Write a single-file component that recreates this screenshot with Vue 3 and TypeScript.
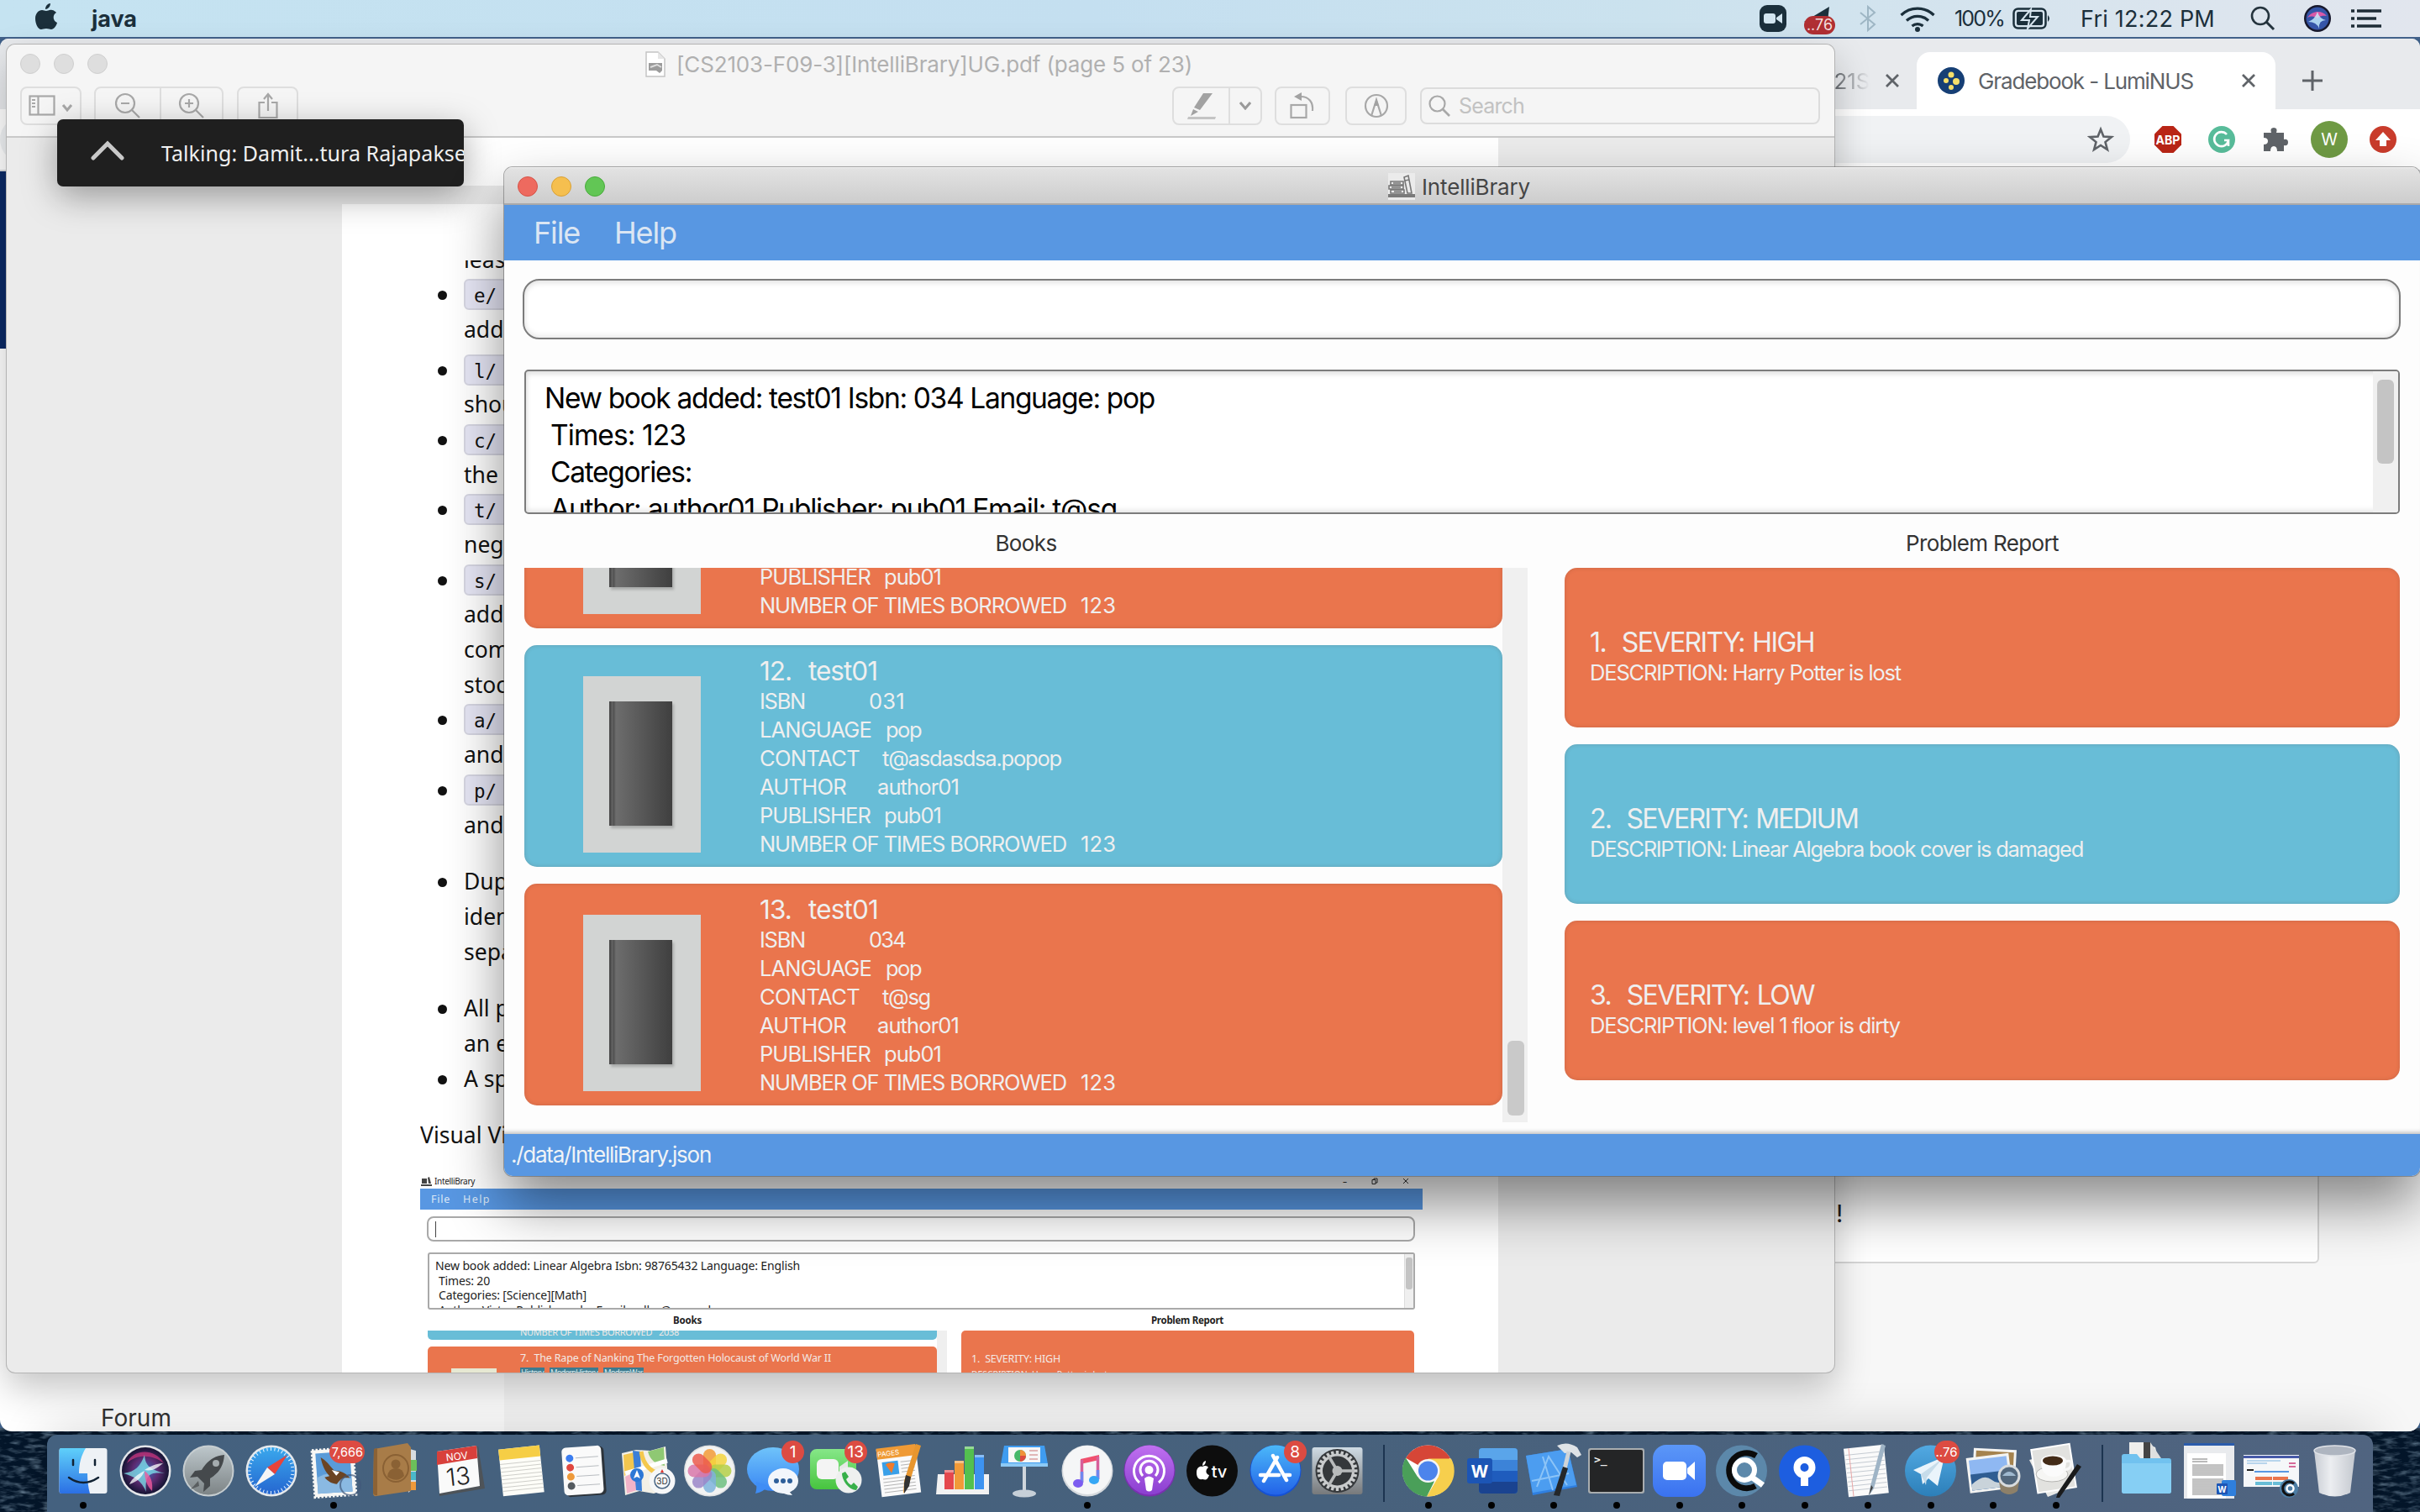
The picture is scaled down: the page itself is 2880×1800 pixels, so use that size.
<script setup lang="ts">
interface Book {
  title: string
  titleWidth: number
  isbn: string
  contact: string
  contactWidth: number
}
interface Problem {
  head: string
  headWidth: number
  text: string
  textWidth: number
}
interface DockItem {
  name: string
  art: string
  running?: boolean
  badge?: string
  wide?: boolean
}
interface GuideItem {
  code?: string
  lines: string[]
  space?: string
}

// Tracks a label so that it fills the given width in pixels.
const vFit = {
  mounted(el: HTMLElement, binding: { value: number }) {
    const natural = el.getBoundingClientRect().width
    const count = (el.textContent ?? '').length
    if (count > 0 && binding.value > 0) {
      el.style.letterSpacing = `${((binding.value - natural) / count).toFixed(3)}px`
    }
  },
}

const books: Book[] = [
  { title: '11.  test01', titleWidth: 139, isbn: '030', contact: 't@sg', contactWidth: 57 },
  { title: '12.  test01', titleWidth: 140, isbn: '031', contact: 't@asdasdsa.popop', contactWidth: 213 },
  { title: '13.  test01', titleWidth: 141, isbn: '034', contact: 't@sg', contactWidth: 57 },
]

const problems: Problem[] = [
  { head: '1.  SEVERITY: HIGH', headWidth: 267, text: 'DESCRIPTION: Harry Potter is lost', textWidth: 370 },
  { head: '2.  SEVERITY: MEDIUM', headWidth: 319, text: 'DESCRIPTION: Linear Algebra book cover is damaged', textWidth: 587 },
  { head: '3.  SEVERITY: LOW', headWidth: 267, text: 'DESCRIPTION: level 1 floor is dirty', textWidth: 369 },
]

const guide: GuideItem[] = [
  { code: 'e/', lines: ['', 'add'] },
  { code: 'l/', lines: ['', 'shou'], space: 'space-s' },
  { code: 'c/', lines: ['', 'the'] },
  { code: 't/', lines: ['', 'nega'] },
  { code: 's/', lines: ['', 'add', 'com', 'stoc'] },
  { code: 'a/', lines: ['', 'and'] },
  { code: 'p/', lines: ['', 'and'] },
  { lines: ['Dup', 'iden', 'sepa'], space: 'space-l' },
  { lines: ['All p', 'an e'], space: 'space-l' },
  { lines: ['A sp'] },
]

const miniBorrowed = 'NUMBER OF TIMES BORROWED   2038'
const miniBook = '7.  The Rape of Nanking The Forgotten Holocaust of World War II'
const miniProblem = '1.  SEVERITY: HIGH'

const range = (n: number): number[] => Array.from({ length: n }, (_, i) => i)

const photoPetals = ['#f39a36', '#f5d33d', '#b5cf48', '#6fbf7f', '#7fb3dc', '#9b86c8', '#d977a9', '#ec5b4c']
  .map((c, i) => `<rect x="30" y="17" width="15" height="27" rx="7.5" fill="${c}" opacity=".85" transform="rotate(${i * 45} 37.5 43)"/>`)
  .join('')
const safariTicks = range(36)
  .map((i) => `<path d="M37.5 15v4" stroke="#e8f4ff" stroke-width="1" transform="rotate(${i * 10} 37.5 43)"/>`)
  .join('')
const gearTeeth = range(24)
  .map((i) => `<rect x="35.8" y="19" width="3.4" height="6" fill="#c9cbcc" transform="rotate(${i * 15} 37.5 43)"/>`)
  .join('')
const ruled = (x: number, y: number, w: number, n: number, gap: number, c: string): string =>
  range(n).map((i) => `<path d="M${x} ${y + i * gap}h${w}" stroke="${c}" stroke-width="1"/>`).join('')
const wordTile = `<rect x="23" y="16" width="46" height="54" rx="4" fill="#2b7cd3"/><path d="M23 20q0-4 4-4h38q4 0 4 4v10H23z" fill="#5aa5ea"/><path d="M23 30h46v13H23z" fill="#3c83d8"/><path d="M23 43h46v13H23z" fill="#1f5cbd"/><path d="M23 56h46v10q0 4-4 4H27q-4 0-4-4z" fill="#1a4390"/><rect x="9" y="28" width="30" height="30" rx="3" fill="#1c55b5"/><text x="24" y="51" text-anchor="middle" font-family="Inter" font-weight="700" font-size="20" fill="#fff">W</text>`

const appsLeft: DockItem[] = [
  { name: 'Finder', running: true, art: `<rect x="9.500" y="16" width="57" height="54" rx="3" fill="#eef2f6"/><path d="M12 16h29c-5 8-8 18-8 30h10c0 8 1 17 3 24H12q-2.500 0-2.500-3V19q0-3 2.500-3z" fill="url(#gFinder)"/><path d="M26 30v6M52 30v6" stroke="#123" stroke-width="2.500" stroke-linecap="round"/><path d="M21 51q17 12 35 0" fill="none" stroke="#123" stroke-width="2.500" stroke-linecap="round"/>` },
  { name: 'Siri', art: `<circle cx="38" cy="43" r="30.500" fill="#e3e5e9"/><circle cx="38" cy="43" r="28" fill="url(#gSiri)"/><path d="M16 34c6-16 32-20 44 0-12-10-32-12-44 0z" fill="#c8357e" opacity=".75"/><path d="M12 46c14-2 20-8 25-22 1 13 6 17 24 22-18-2-24 2-22 22-6-14-14-18-27-22z" fill="#7fe5ee" opacity=".75"/><path d="M37 42c6-4 14-8 22-8-6 5-12 10-22 8zM37 43c-8 4-15 9-18 16 9-3 15-8 18-16z" fill="#fff" opacity=".75"/><path d="M37 43c8 6 10 14 9 24-6-6-9-14-9-24z" fill="#f05a9d" opacity=".8"/>` },
  { name: 'Launchpad', art: `<circle cx="38" cy="43" r="30.500" fill="#c6cdd0"/><circle cx="38" cy="43" r="28.500" fill="url(#gSilver)"/><path d="M57 24c-13 1-21 8-27 18l-8 1-6 8 9-1 8 8-1 10 8-7 0-9c10-6 16-14 17-28z" fill="#45494c"/><circle cx="47" cy="34" r="4" fill="#a4abae"/><path d="M26 55l-9 10 10-4z" fill="#5a5e60"/>` },
  { name: 'Safari', art: `<circle cx="38" cy="43" r="30.500" fill="#e6e9ec"/><circle cx="38" cy="43" r="28" fill="url(#gSafari)"/>${safariTicks}<path d="M57 24L33 39l9 8z" fill="#e8433a"/><path d="M18 62l15-23 9 8z" fill="#f5f5f5"/>` },
  { name: 'Mail', running: true, badge: '7,666', wide: true, art: `<g transform="rotate(-4 37 46)"><rect x="14" y="17" width="49" height="56" fill="#f7f7f5" stroke="#f7f7f5" stroke-width="3" stroke-dasharray="2.500 2"/><rect x="18" y="21" width="41" height="48" fill="#5a9bd8"/><path d="M18 50q20-10 41 4v15H18z" fill="#8ab9e2"/><path d="M24 26c6 4 10 10 15 17 6 0 14 4 18 10-8-2-11 0-16 6-5-1-10-3-14-9l6-1c-5-6-8-14-9-23z" fill="#6b4423"/><path d="M36 42l9 3-4 4z" fill="#fff"/></g><circle cx="58" cy="60" r="12" fill="none" stroke="#42597a" stroke-width="2" opacity=".7"/>` },
  { name: 'Contacts', art: `<path d="M50 16l11 3v42l-9 8z" fill="#d7dce0"/><path d="M54 30h8v13h-8z" fill="#6cbf5a"/><path d="M54 44h7v10h-7z" fill="#4ab8c9"/><path d="M54 56h7v10h-7z" fill="#f09a3a"/><path d="M11 17l40-7 4 5v52L14 73q-4 1-4-4z" fill="#a87c48"/><path d="M11 17l4-1v56q-5 1-5-4z" fill="#8c6235"/><ellipse cx="37" cy="40" rx="15" ry="16" fill="none" stroke="#8a6134" stroke-width="2"/><circle cx="37" cy="35" r="5.500" fill="#8a6134"/><path d="M27 50q1-10 10-10t10 9q-8 9-20 1z" fill="#8a6134"/>` },
  { name: 'Calendar', art: `<path d="M12 22l48-8 8 50-54 9z" fill="#4e5358"/><path d="M11 20l47-7 4 48-48 9z" fill="#fafafa"/><path d="M11 20l47-7 1 15-48 8z" fill="#d8403b"/><text x="35" y="30" text-anchor="middle" transform="rotate(-7 35 28)" font-family="Inter" font-size="12" fill="#fff">NOV</text><text x="37" y="60" text-anchor="middle" transform="rotate(-6 37 56)" font-family="Inter" font-weight="300" font-size="29" fill="#222">13</text>` },
  { name: 'Notes', art: `<g transform="rotate(-6 37 44)"><rect x="13" y="15" width="49" height="56" fill="#fdfdf8"/><rect x="13" y="15" width="49" height="13" fill="#f6ce45"/>${ruled(13, 33, 49, 8, 4.6, '#cfcfca')}</g>` },
  { name: 'Reminders', art: `<g transform="rotate(-4 37 44)"><rect x="12" y="14" width="47" height="58" rx="5" fill="#2d343b" transform="translate(3 1)"/><rect x="12" y="14" width="47" height="57" rx="5" fill="#fafafa"/><circle cx="21" cy="27" r="4.500" fill="#3b7df0"/><circle cx="21" cy="38" r="4.500" fill="#e0473f"/><circle cx="21" cy="49" r="4.500" fill="#ee9a3b"/><circle cx="21" cy="60" r="4.500" fill="#555b60"/>${ruled(28, 27, 27, 4, 11, '#b8bcc0')}</g>` },
  { name: 'Maps', art: `<path d="M7 22l17-4 17 1 18-5 4 50-18 6-17-3-17 5z" fill="#f3f0e6"/><path d="M9 24l13-3 1 20-13 8z" fill="#f2c64f"/><path d="M38 20l19-5 1 22q-16-2-20-17z" fill="#8fc873"/><path d="M11 50l12-6 2 22-12 4z" fill="#f1b3c8"/><path d="M20 19l9 1 2 47-7-1z" fill="#3b7fd8"/><path d="M11 46l50-15" stroke="#fff" stroke-width="5"/><path d="M30 20q4 26 30 28" fill="none" stroke="#f4c84c" stroke-width="5"/><circle cx="25" cy="48" r="8" fill="#2b77d6"/><path d="M25 42l4 10-4-2-4 2z" fill="#fff"/><circle cx="55" cy="55" r="15.500" fill="#f6f7f8"/><circle cx="55" cy="55" r="9" fill="none" stroke="#4a6684" stroke-width="1.500"/><text x="55" y="59" text-anchor="middle" font-family="Inter" font-size="10" fill="#333">3D</text><path d="M55 41l2 4h-4z" fill="#e0342d"/>` },
  { name: 'Photos', art: `<circle cx="37.500" cy="43" r="30.500" fill="#dfe1e2"/><circle cx="37.500" cy="43" r="29" fill="#f2f3f3"/>${photoPetals}` },
  { name: 'Messages', badge: '1', art: `<ellipse cx="38" cy="41" rx="31" ry="26" fill="url(#gBlue)"/><path d="M18 56q1 8-1 14 10-2 15-9z" fill="#3f8df5"/><ellipse cx="50" cy="55" rx="18" ry="15" fill="#f2f6fb"/><path d="M56 66l5 6q-7 0-12-3z" fill="#f2f6fb"/><circle cx="42" cy="55" r="3" fill="#2e5f9a"/><circle cx="50" cy="55" r="3" fill="#2e5f9a"/><circle cx="58" cy="55" r="3" fill="#2e5f9a"/>` },
  { name: 'FaceTime', badge: '13', art: `<rect x="7" y="17" width="55" height="48" rx="8" fill="url(#gGreen)"/><rect x="15" y="29" width="26" height="24" rx="6" fill="#f4f4f4"/><path d="M42 38l10-7v20l-10-7z" fill="#e6e8e6"/><circle cx="53" cy="54" r="15.500" fill="#eef0ef"/><path d="M45 46l4-2 4 6-3 3q2 5 6 7l3-3 5 5-2 4q-6 0-12-7-5-7-5-13z" fill="#37b04a"/>` },
  { name: 'Pages', art: `<g transform="rotate(-7 35 44)"><rect x="14" y="15" width="47" height="57" fill="#fafafa"/><rect x="14" y="14" width="47" height="13" fill="#ef9a35"/><text x="28" y="24" text-anchor="middle" font-family="Inter" font-size="8" fill="#fff">PAGES</text><rect x="19" y="31" width="19" height="16" fill="#3aa0e8"/><path d="M23 34q5-3 11 0l-5 11z" fill="#f07b2b"/>${ruled(41, 33, 16, 4, 4, '#b5b5b5')}${ruled(18, 51, 38, 5, 4, '#b5b5b5')}</g><path d="M58 11l6 2-13 42-8 15 1-15z" fill="#e8962e"/><path d="M46 48l6 2-2 11-6 9 0-12z" fill="#333"/>` },
  { name: 'Numbers', art: `<path d="M10 47h61v24H8z" fill="#f2f2f2"/><rect x="18" y="42" width="11" height="23" fill="#e5484d"/><rect x="30" y="31" width="11" height="34" fill="#f19a38"/><rect x="42" y="14" width="11" height="51" fill="#53c04f"/><rect x="54" y="24" width="11" height="41" fill="#3d93f0"/><path d="M18 42h11v3H18zM30 31h11v3H30zM42 14h11v3H42zM54 24h11v3H54z" fill="#fff" opacity=".4"/>` },
  { name: 'Keynote', art: `<path d="M14 13h48l4 22H10z" fill="#3f9cf0"/><path d="M10 34h56v4H10z" fill="#8cc9f5"/><rect x="19" y="15" width="38" height="18" fill="#f7f7f7"/><circle cx="33" cy="25" r="7" fill="#46b86b"/><path d="M33 25V18a7 7 0 0 1 7 7z" fill="#f0913a"/><path d="M33 25h7a7 7 0 0 1-7 7z" fill="#dd4a42"/><path d="M44 19h10M44 24h10M44 29h10" stroke="#c77" stroke-width="1"/><rect x="36" y="38" width="4" height="29" fill="#cfd6dc"/><ellipse cx="38" cy="70" rx="14" ry="4.500" fill="#c6cfd8"/>` },
  { name: 'Music', running: true, art: `<circle cx="38" cy="43" r="30.500" fill="#d5d9dd"/><circle cx="38" cy="42" r="29" fill="#f5f6f7"/><path d="M30 29l22-5v6l-22 5z" fill="#f0506e"/><path d="M31.500 30v27M50.500 26v27" stroke="#d65f9a" stroke-width="3.500"/><path d="M31.500 44v13M50.500 42v11" stroke="#6f86ee" stroke-width="3.500"/><ellipse cx="27" cy="58" rx="6" ry="5" fill="#7c5cf0"/><ellipse cx="46" cy="54" rx="6" ry="5" fill="#35a7f5"/>` },
  { name: 'Podcasts', art: `<circle cx="38" cy="43" r="30.500" fill="#7a2fb0"/><circle cx="38" cy="42" r="29.500" fill="url(#gPurple)"/><g fill="none" stroke="#fff" stroke-width="3"><path d="M26 57a18 18 0 1 1 23 0"/><path d="M30 49a10.500 10.500 0 1 1 15 0"/></g><circle cx="37.500" cy="42" r="5" fill="#fff"/><path d="M32 52q5-5 11 0l-2 14q-3.500 3-7 0z" fill="#fff"/>` },
  { name: 'TV', art: `<circle cx="37.500" cy="43" r="30.500" fill="#0d0d0d"/><path d="M26 38c3-2 6-1 7 1-4 3-3 8 1 9-2 6-4 6-8 5-5 1-7-3-7-8 0-6 4-8 7-7zM26 37q0-5 4-6 0 5-4 6z" fill="#fff"/><text x="46" y="51" text-anchor="middle" font-family="Inter" font-weight="500" font-size="20" fill="#fff">tv</text>` },
  { name: 'App Store', badge: '8', art: `<circle cx="38" cy="43" r="30.500" fill="#1551d4"/><circle cx="38" cy="42" r="29.500" fill="url(#gStore)"/><g stroke="#fff" stroke-width="4.500" stroke-linecap="round"><path d="M40 27L24 55M35 25l16 29M20 48h22M48 48h7"/></g>` },
  { name: 'System Preferences', art: `<rect x="7.500" y="15" width="60" height="56" rx="3" fill="url(#gSilver2)"/><circle cx="37.500" cy="43" r="26" fill="#35383b"/>${gearTeeth}<circle cx="37.500" cy="43" r="19" fill="none" stroke="#c9cbcc" stroke-width="3"/><circle cx="37.500" cy="43" r="6" fill="#b8babb"/><path d="M37.500 43h20M37.500 43l-10-17M37.500 43l-10 17" stroke="#b8babb" stroke-width="3.500"/>` },
]

const appsRight: DockItem[] = [
  { name: 'Chrome', running: true, art: `<circle cx="37.500" cy="43" r="30.500" fill="#fff"/><path d="M37.500 43L11.100 27.700A30.500 30.500 0 0 1 64 28z" fill="#d64637"/><path d="M37.500 28.500H65A30.500 30.500 0 0 1 36 73.500l14-24z" fill="#f7cf4d"/><path d="M25 50L11 27.500A30.500 30.500 0 0 0 36 73.500l9-18z" fill="#4a9f59"/><circle cx="37.500" cy="43" r="14" fill="#f5f5f5"/><circle cx="37.500" cy="43" r="11.500" fill="#4c84ec"/>` },
  { name: 'Word', running: true, art: wordTile },
  { name: 'Xcode', running: true, art: `<path d="M5 25l50-8 11 45-53 10z" fill="#2f7fe0"/><path d="M5 25l50-8 10 43-52 9z" fill="#4c9df0"/><g fill="none" stroke="#8cc4f7" stroke-width="2"><path d="M18 62l14-36 22 34M12 55l44-9M25 26l12 40"/></g><path d="M42 13q12-6 24 2l5 9-5 3-7-6-8 1z" fill="#dfe3e6"/><path d="M56 20l-6 25" stroke="#cfd4d8" stroke-width="5"/><path d="M49 38l6 2-10 33-7-1z" fill="#24272a"/>` },
  { name: 'Terminal', running: true, art: `<rect x="4" y="16" width="67" height="54" rx="3" fill="#a9adaf"/><rect x="6" y="18" width="63" height="50" rx="2" fill="#242526"/><text x="11" y="34" font-family="DejaVu Sans Mono" font-weight="700" font-size="13" fill="#eee">&gt;_</text>` },
  { name: 'Zoom', running: true, art: `<rect x="6" y="12" width="63" height="62" rx="16" fill="url(#gZoom)"/><rect x="18" y="32" width="28" height="22" rx="5" fill="#fff"/><path d="M47 40l9-8v22l-9-8z" fill="#fff"/>` },
  { name: 'Search', running: true, art: `<circle cx="37.500" cy="43" r="30.500" fill="#5c88aa"/><path d="M55 25a21 21 0 1 0-1 36" fill="none" stroke="#0b0b0b" stroke-width="7"/><circle cx="41" cy="42" r="12" fill="none" stroke="#fff" stroke-width="6"/><path d="M49 50l14 10" stroke="#fff" stroke-width="7"/>` },
  { name: 'Sourcetree', running: true, art: `<circle cx="37.500" cy="43" r="30.500" fill="#1d5ee0"/><circle cx="37.500" cy="39" r="9" fill="none" stroke="#fff" stroke-width="8"/><rect x="33" y="48" width="9" height="13" fill="#fff"/>` },
  { name: 'TextEdit', running: true, art: `<g transform="rotate(-6 36 44)"><rect x="12" y="14" width="48" height="58" fill="#fafafa"/>${ruled(13, 22, 46, 9, 5.3, '#c5cbd2')}<path d="M18 14v58" stroke="#e8a6a6"/></g><path d="M54 11l5 2-14 51-6 9 2-12z" fill="#9fb4c6"/><path d="M42 60l-3 12 5-9z" fill="#444"/>` },
  { name: 'Telegram', running: true, badge: '..76', art: `<circle cx="37.500" cy="43" r="30.500" fill="url(#gTele)"/><path d="M17 42l37-16-8 35-11-9-7 7-2-12z" fill="#eaf4fb"/><path d="M26 47l25-18-18 22-1 9z" fill="#c6dcea"/>` },
  { name: 'Preview', running: true, art: `<g transform="rotate(3 40 36)"><rect x="14" y="17" width="51" height="42" fill="#f4f4f2"/><rect x="17" y="20" width="45" height="36" fill="#a5834e"/></g><g transform="rotate(-7 32 46)"><rect x="8" y="25" width="51" height="42" fill="#f4f4f2"/><rect x="11" y="28" width="45" height="36" fill="#8fb8f2"/><path d="M11 45h45v19H11z" fill="#2f5d92"/><path d="M11 57q16-12 24-3t21 0v10H11z" fill="#c9d3da"/></g><path d="M44 50h26l-3 17q-10 8-20 0z" fill="#8d8069"/><circle cx="57" cy="49" r="12" fill="#53687d" stroke="#d8dcdf" stroke-width="3"/><path d="M49 49q8-10 16 0z" fill="#9fb9cf"/>` },
  { name: 'Automator', running: true, art: `<path d="M6 30l18-5 37 36-33 13z" fill="#e9e9e7"/><g transform="rotate(-9 36 40)"><rect x="12" y="14" width="46" height="52" fill="#e2e2df" stroke="#fff" stroke-width="2"/></g><ellipse cx="33" cy="47" rx="19" ry="9" fill="#f6f6f4" stroke="#b5b5b2"/><path d="M20 31h30q0 19-15 19T20 31z" fill="#fbfbfb"/><ellipse cx="35" cy="31" rx="15" ry="7" fill="#fbfbfb"/><ellipse cx="34" cy="31" rx="12" ry="5.500" fill="#432b17"/><path d="M49 32q9-3 6 6-3 5-9 3" fill="none" stroke="#f8f8f8" stroke-width="3"/><path d="M63 35l5 3-26 37-4 0 2-6z" fill="#1a1b1c"/>` },
]

const stacks: DockItem[] = [
  { name: 'Downloads', art: `<path d="M17 9h17l14 6 4 16H17z" fill="#eeeeec"/><path d="M34 9h8v22h-8z" fill="#444"/><path d="M42 9l15 22H42z" fill="#dfe0e0"/><path d="M8 26q0-3 3-3h15l4 5h34q3 0 3 3v36q0 3-3 3H11q-3 0-3-3z" fill="#71c2ef"/><path d="M8 34h59v33q0 3-3 3H11q-3 0-3-3z" fill="#86cff4"/>` },
  { name: 'Document', art: `<rect x="8" y="10" width="60" height="66" fill="#e9ebee"/><rect x="8" y="10" width="60" height="3" fill="#2b5cab"/><rect x="12" y="22" width="46" height="54" fill="#fff"/>${ruled(18, 29, 18, 2, 3, '#777')}${ruled(18, 36, 37, 7, 2, '#888')}${ruled(18, 53, 37, 10, 2, '#888')}<rect x="53" y="54" width="17" height="19" rx="2" fill="#2f7fdc"/><rect x="47" y="58" width="13" height="13" rx="1" fill="#1c55b5"/><text x="53.500" y="68.500" text-anchor="middle" font-family="Inter" font-weight="700" font-size="10" fill="#fff">W</text>` },
  { name: 'Window', art: `<rect x="4" y="24" width="66" height="38" fill="#f5f7f9"/><rect x="4" y="25" width="66" height="3" fill="#4659a8"/><path d="M8 31h40M8 34h24" stroke="#7bb3e0"/><path d="M58 34h8M58 38h8" stroke="#d56a9a" stroke-width="2"/><rect x="17" y="43" width="41" height="2" fill="#5897e2"/><path d="M8 41h8v2H8z" fill="#222"/><path d="M18 50h20v4H18zM39 50h18v4H39z" fill="#ea754d"/><path d="M18 56h20v4H18zM39 56h18v4H39z" fill="#68bdd7"/><circle cx="58" cy="64" r="11" fill="#4d7ea5"/><path d="M64 58a8 8 0 1 0 0 12" fill="none" stroke="#111" stroke-width="3"/><circle cx="59.500" cy="64" r="4" fill="none" stroke="#fff" stroke-width="2.500"/>` },
  { name: 'Trash', art: `<path d="M13 19h49l-6 50q-18 9-37 0z" fill="url(#gTrash)"/><ellipse cx="37.500" cy="19" rx="24.500" ry="6" fill="#aeb5c0" stroke="#e0e3e8" stroke-width="1.500"/>` },
]
const dockGroups: DockItem[][] = [appsLeft, appsRight, stacks]
</script>

<template>
  <div class="desktop">
    <svg class="wallpaper" width="2880" height="100">
      <filter id="sea"><feTurbulence type="fractalNoise" baseFrequency=".06 .2" numOctaves="3" seed="4" /><feColorMatrix values="0 0 0 0 .2  0 0 0 0 .3  0 0 0 0 .4  1.6 0 0 0 -.72" /></filter>
      <rect width="2880" height="100" fill="#04162a" />
      <rect width="2880" height="100" filter="url(#sea)" />
    </svg>

    <header class="menubar">
      <svg class="apple" width="26" height="32" viewBox="0 0 26 32"><path d="M18 0c0 4-3 7-6 7 0-4 3-7 6-7zM13 9c2 0 4-2 7-1 2 0 4 2 5 3-5 3-4 10 1 12-1 4-4 8-7 8-2 0-3-1-6-1s-4 1-6 1C3 31 0 24 0 18 0 12 4 8 8 8c2 0 3 1 5 1z" fill="#1b2f3b" /></svg>
      <span v-fit="54" class="menubar-app">java</span>
      <div class="status">
        <svg width="32" height="32" viewBox="0 0 32 32"><rect width="32" height="32" rx="9" fill="#1b2f3b" /><rect x="5" y="10" width="14" height="12" rx="3" fill="#d2e5ef" /><path d="M20 15l7-5v12l-7-5z" fill="#d2e5ef" /></svg>
        <div class="tray">
          <svg width="34" height="32" viewBox="0 0 34 32"><path d="M0 20L30 2l-3 26z" fill="#1b2f3b" /></svg>
          <span class="tray-badge">..76</span>
        </div>
        <svg class="ml-bt" width="20" height="32" viewBox="0 0 20 32"><path d="M1 9l17 14-8 7V2l8 7L1 23" fill="none" stroke="#9eb6c4" stroke-width="2" /></svg>
        <svg class="ml-wifi" width="42" height="32" viewBox="0 0 42 32"><g fill="none" stroke="#1b2f3b" stroke-width="3.2"><path d="M1.500 12a28 28 0 0 1 39 0M8 18.500a19 19 0 0 1 26 0M14.500 25a10 10 0 0 1 13 0" /></g><circle cx="21" cy="29" r="3" fill="#1b2f3b" /></svg>
        <span v-fit="59" class="ml-pct st-text">100%</span>
        <svg class="ml-bat" width="46" height="26" viewBox="0 0 46 26"><rect x="1.500" y="1.500" width="38" height="23" rx="5" fill="none" stroke="#1b2f3b" stroke-width="2.500" /><rect x="5" y="5" width="31" height="16" rx="2" fill="#1b2f3b" /><path d="M42 9q4 4 0 8z" fill="#1b2f3b" /><path d="M22 2L11 15h9l-2 10 12-14h-9z" fill="#1b2f3b" stroke="#d6e4ee" stroke-width="2" /></svg>
        <span v-fit="160" class="ml-time st-text st-time">Fri 12:22 PM</span>
        <svg class="ml-find" width="30" height="30" viewBox="0 0 30 30"><circle cx="12" cy="12" r="10" fill="none" stroke="#24333d" stroke-width="2.600" /><path d="M19 19l9 9" stroke="#24333d" stroke-width="3" /></svg>
        <svg class="ml-siri" width="32" height="32" viewBox="0 0 32 32"><circle cx="16" cy="16" r="16" fill="#17182c" /><circle cx="16" cy="16" r="13.500" fill="#3555a8" /><path d="M4 15c5-8 17-10 23-2-8-1-10 2-11 3-4-3-8-3-12-1z" fill="#d85aa8" /><path d="M5 20q8-3 11-12 2 8 10 10-9 0-8 10-3-8-13-8z" fill="#c9f1ff" opacity=".8" /></svg>
        <svg class="ml-list" width="36" height="22" viewBox="0 0 36 22"><path d="M0 2h4M7 2h29M0 11h4M7 11h23M0 20h4M7 20h29" stroke="#1e2c36" stroke-width="3.600" /></svg>
      </div>
    </header>

    <section class="chrome">
      <div class="tabs">
        <span class="tab-prev">021S</span>
        <svg class="tab-x" width="18" height="18" viewBox="0 0 18 18"><path d="M2 2l14 14M16 2L2 16" stroke="#5f6368" stroke-width="2.800" /></svg>
        <div class="tab">
          <svg width="32" height="32" viewBox="0 0 32 32"><circle cx="16" cy="16" r="16" fill="#163f75" /><g fill="#f7e06a"><circle cx="16" cy="9" r="3.500" /><circle cx="10" cy="16" r="3" /><circle cx="22" cy="17" r="4" /><circle cx="16" cy="24" r="3" /></g></svg>
          <span v-fit="256" class="tab-title">Gradebook - LumiNUS</span>
          <svg class="tab-close" width="18" height="18" viewBox="0 0 18 18"><path d="M2 2l14 14M16 2L2 16" stroke="#5f6368" stroke-width="2.800" /></svg>
        </div>
        <svg class="tab-plus" width="26" height="26" viewBox="0 0 26 26"><path d="M13 1v24M1 13h24" stroke="#5f6368" stroke-width="3" /></svg>
      </div>
      <div class="omni-row">
        <div class="omni"><svg width="32" height="32" viewBox="0 0 32 32"><path d="M16 4l3.400 8.600 9.300.6-7.200 5.900 2.400 9L16 23l-7.900 5.100 2.400-9-7.200-5.900 9.300-.6z" fill="none" stroke="#5f6368" stroke-width="2.600" /></svg></div>
        <div class="exts">
          <svg width="32" height="32" viewBox="0 0 32 32"><path d="M9.500 0h13L32 9.500v13L22.500 32h-13L0 22.500v-13z" fill="#b92516" /><text x="16" y="21.500" text-anchor="middle" font-family="Inter" font-weight="700" font-size="14" fill="#fff" textLength="29" lengthAdjust="spacingAndGlyphs">ABP</text></svg>
          <svg width="32" height="32" viewBox="0 0 32 32"><circle cx="16" cy="16" r="16" fill="#58bc9a" /><path d="M22 10a8.500 8.500 0 1 0 2 7h-5M24 17v7" fill="none" stroke="#fff" stroke-width="2.600" /></svg>
          <svg width="32" height="32" viewBox="0 0 32 32"><path d="M2 8h9q-2-6 3-6t3 6h9v8q5-1 5 3.500T26 23v7h-8q0-6-4-6t-4 6H2v-8q5 0 5-4t-5-4z" fill="#5f6368" /></svg>
          <span class="avatar">W</span>
          <svg width="32" height="32" viewBox="0 0 32 32"><circle cx="16" cy="16" r="16" fill="#c93c2c" /><path d="M16 7l9 10h-5v7h-8v-7H7z" fill="#fff" /></svg>
        </div>
      </div>
      <div class="page">
        <div class="page-band"></div>
        <aside class="page-side"><span v-fit="84">Forum</span></aside>
        <div class="page-main">
          <div class="page-card"><span>!</span></div>
        </div>
      </div>
    </section>

    <section class="preview">
      <div class="pv-head">
        <div class="pv-title">
          <div class="lights off"><i></i><i></i><i></i></div>
          <div class="pv-name">
            <svg width="24" height="31" viewBox="0 0 24 31"><path d="M1 1h14l8 8v21H1z" fill="#fff" stroke="#c4c4c4" stroke-width="1.500" /><path d="M15 1l8 8h-8z" fill="#e6e6e6" /><path d="M4 14h16v9l-3 3-4-3H4z" fill="#9b9b9b" /><path d="M6 19l8-3 5 3" stroke="#ddd" stroke-width="2" fill="none" /></svg>
            <span v-fit="614">[CS2103-F09-3][IntelliBrary]UG.pdf (page 5 of 23)</span>
          </div>
        </div>
        <div class="pv-tools">
          <div class="btn w73"><svg width="54" height="28" viewBox="0 0 54 28"><g fill="none" stroke="#a8a8a8" stroke-width="2.200"><rect x="1.500" y="2.500" width="29" height="22" /><path d="M11.500 2v23" /><path d="M41 13l5 6 5-6" stroke-width="3" /></g><path d="M4 7h4M4 11h4M4 15h4" stroke="#a8a8a8" stroke-width="2" /></svg></div>
          <div class="btn w80 left"><svg width="32" height="32" viewBox="0 0 32 32"><g fill="none" stroke="#a8a8a8" stroke-width="2.200"><circle cx="13" cy="13" r="11" /><path d="M8 13h10M21 21l9 9" /></g></svg></div>
          <div class="btn w75 right"><svg width="32" height="32" viewBox="0 0 32 32"><g fill="none" stroke="#a8a8a8" stroke-width="2.200"><circle cx="13" cy="13" r="11" /><path d="M8 13h10M13 8v10M21 21l9 9" /></g></svg></div>
          <div class="btn w73 share"><svg width="24" height="32" viewBox="0 0 24 32"><g fill="none" stroke="#a8a8a8" stroke-width="2.200"><path d="M8 12H1.500v18h21V12H16M12 22V3M7 8l5-6 5 6" /></g></svg></div>
          <div class="btn w68 left hl"><svg width="36" height="32" viewBox="0 0 36 32"><path d="M20 1h11L16 21l-7-3zM8 20l6 3-9 5z" fill="#a2a2a2" /><path d="M2 29h33l-1 3H1z" fill="#c4c4c4" /></svg></div>
          <div class="btn w39 right"><svg width="14" height="10" viewBox="0 0 14 10"><path d="M1 1l6 7 6-7" fill="none" stroke="#9a9a9a" stroke-width="3" /></svg></div>
          <div class="btn w66 g14"><svg width="30" height="32" viewBox="0 0 30 32"><g fill="none" stroke="#a8a8a8" stroke-width="2.200"><rect x="1.500" y="15" width="18" height="15" /><path d="M13 5c10 0 15 7 14 17" /></g><path d="M5 5l9-5v10z" fill="#a2a2a2" /></svg></div>
          <div class="btn w73 g18"><svg width="30" height="30" viewBox="0 0 30 30"><g fill="none" stroke="#a8a8a8" stroke-width="2.200"><circle cx="15" cy="15" r="13" /><path d="M9 27l6-19 6 19" /></g><path d="M15 6l3 9h-6z" fill="#a2a2a2" /></svg></div>
          <div class="search"><svg width="26" height="26" viewBox="0 0 26 26"><circle cx="10.500" cy="10.500" r="9" fill="none" stroke="#a8a8a8" stroke-width="2.200" /><path d="M17 17l8 8" stroke="#a8a8a8" stroke-width="2.600" /></svg><span v-fit="78">Search</span></div>
        </div>
      </div>
      <div class="pv-body">
        <div class="prev-page"></div>
        <div class="pdf">
          <div class="pdf-text">
            <div class="pl in">leas</div>
            <div v-for="(item, i) in guide" :key="i" class="bullet" :class="item.space">
              <i class="dot"></i>
              <div>
                <div v-for="(line, j) in item.lines" :key="j" class="pl"><code v-if="j === 0 && item.code">{{ item.code }}</code>{{ line }}</div>
              </div>
            </div>
            <div class="pl visual">Visual Vi</div>
          </div>
          <div class="mini">
            <div class="m-title">
              <svg width="13" height="11" viewBox="0 0 13 11"><path d="M0 9h13v2H0zM1 2h6v6H1zM8 1l2-1 2 8H9z" fill="#444" /></svg>
              <span v-fit="48">IntelliBrary</span>
              <div class="m-ctl"><b>–</b><svg width="8" height="8" viewBox="0 0 8 8"><path d="M1 2.500h4v5H1zM3 2.500V1h4v5H5" fill="none" stroke="#333" /></svg><svg width="8" height="8" viewBox="0 0 8 8"><path d="M1 1l6 6M7 1L1 7" stroke="#333" /></svg></div>
            </div>
            <div class="m-menu"><span v-fit="23">File</span><span v-fit="33">Help</span></div>
            <div class="m-input"><i></i></div>
            <div class="m-result">
              <div><span v-fit="434">New book added: Linear Algebra Isbn: 98765432 Language: English</span></div>
              <div class="ind"><span v-fit="61">Times: 20</span></div>
              <div class="ind"><span v-fit="176">Categories: [Science][Math]</span></div>
              <div class="ind"><span v-fit="363">Author: Victor Publisher: pku Email: seller@example.com</span></div>
              <div class="m-bar"><i></i></div>
            </div>
            <div class="m-heads"><b v-fit="34">Books</b><b v-fit="86">Problem Report</b></div>
            <div class="m-lists">
              <div class="m-left">
                <div class="m-card teal clip"><span v-fit="189">{{ miniBorrowed }}</span></div>
                <div class="m-card orange">
                  <i class="m-cover"></i>
                  <div><span v-fit="370">{{ miniBook }}</span>
                    <div class="m-tags"><em v-fit="29">History</em><em v-fit="58">ModernHistory</em><em v-fit="48">ModernWar</em></div>
                  </div>
                </div>
              </div>
              <div class="m-track"></div>
              <div class="m-right"><span v-fit="106">{{ miniProblem }}</span><small v-fit="162">DESCRIPTION: Harry Potter is lost</small></div>
            </div>
          </div>
        </div>
      </div>
    </section>

    <div class="talk">
      <svg width="40" height="24" viewBox="0 0 40 24"><path d="M3 21L20 4l17 17" fill="none" stroke="#c9c9c9" stroke-width="5" stroke-linecap="round" /></svg>
      <span v-fit="363">Talking: Damit...tura Rajapakse</span>
    </div>

    <section class="app">
      <div class="app-title">
        <div class="lights"><i class="r"></i><i class="y"></i><i class="g"></i></div>
        <div class="app-name">
          <svg width="32" height="32" viewBox="0 0 32 32"><rect width="32" height="32" fill="#ebebeb" /><path d="M0 25h32v4H0z" fill="#7a7a7a" /><g fill="none" stroke="#777" stroke-width="1.600"><path d="M3 10h15v4H3zM1 15h17v4H1zM3 20h16v4H3zM6 12h9M4 17h11M7 22h9" /><path d="M19 5l5-2 4 21h-5zM20 9l5-1" /></g></svg>
          <span v-fit="129">IntelliBrary</span>
        </div>
      </div>
      <nav class="app-menu"><span v-fit="55">File</span><span v-fit="74">Help</span></nav>
      <div class="app-body">
        <div class="cmd"></div>
        <div class="result">
          <div class="result-text">
            <div><span v-fit="726">New book added: test01 Isbn: 034 Language: pop</span></div>
            <div class="ind"><span v-fit="161">Times: 123</span></div>
            <div class="ind"><span v-fit="168">Categories:</span></div>
            <div class="ind"><span v-fit="674">Author: author01 Publisher: pub01 Email: t@sg</span></div>
          </div>
          <div class="result-bar"><i></i></div>
        </div>
        <div class="heads"><span class="h-books"><span v-fit="73">Books</span></span><span class="h-problems"><span v-fit="182">Problem Report</span></span></div>
        <div class="lists">
          <div class="books">
            <article v-for="(b, i) in books" :key="b.title" class="book" :class="i % 2 ? 'teal' : 'orange'">
              <div class="cover"><i></i></div>
              <div class="info">
                <div class="info-title"><span v-fit="b.titleWidth">{{ b.title }}</span></div>
                <div class="row"><span v-fit="54">ISBN</span><span v-fit="43" class="v-isbn">{{ b.isbn }}</span></div>
                <div class="row"><span v-fit="133">LANGUAGE</span><span v-fit="42" class="v-lang">pop</span></div>
                <div class="row"><span v-fit="119">CONTACT</span><span v-fit="b.contactWidth" class="v-contact">{{ b.contact }}</span></div>
                <div class="row"><span v-fit="103">AUTHOR</span><span v-fit="97" class="v-author">author01</span></div>
                <div class="row"><span v-fit="132">PUBLISHER</span><span v-fit="68" class="v-pub">pub01</span></div>
                <div class="row"><span v-fit="365">NUMBER OF TIMES BORROWED</span><span v-fit="42" class="v-num">123</span></div>
              </div>
            </article>
          </div>
          <div class="track"><i></i></div>
          <div class="problems">
            <article v-for="(p, i) in problems" :key="p.head" class="problem" :class="i % 2 ? 'teal' : 'orange'">
              <div class="p-head"><span v-fit="p.headWidth">{{ p.head }}</span></div>
              <div class="p-text"><span v-fit="p.textWidth">{{ p.text }}</span></div>
            </article>
          </div>
        </div>
      </div>
      <footer class="app-foot"><span v-fit="238">./data/IntelliBrary.json</span></footer>
    </section>

    <div class="dock">
      <svg width="0" height="0" class="defs">
        <defs>
          <linearGradient id="gFinder" x1="0" y1="0" x2="0" y2="1"><stop offset="0" stop-color="#5fd0fa" /><stop offset="1" stop-color="#2b6fe4" /></linearGradient>
          <radialGradient id="gSiri"><stop offset="0" stop-color="#3a6fc0" /><stop offset=".55" stop-color="#5b2a70" /><stop offset="1" stop-color="#141433" /></radialGradient>
          <linearGradient id="gSilver" x1="0" y1="0" x2="0" y2="1"><stop offset="0" stop-color="#bcc6ca" /><stop offset="1" stop-color="#7d8486" /></linearGradient>
          <linearGradient id="gSilver2" x1="0" y1="0" x2="0" y2="1"><stop offset="0" stop-color="#cfdbe4" /><stop offset="1" stop-color="#77797b" /></linearGradient>
          <linearGradient id="gSafari" x1="0" y1="0" x2="0" y2="1"><stop offset="0" stop-color="#3aa8ec" /><stop offset="1" stop-color="#2566d0" /></linearGradient>
          <linearGradient id="gBlue" x1="0" y1="0" x2="0" y2="1"><stop offset="0" stop-color="#6fc3fa" /><stop offset="1" stop-color="#3a87f4" /></linearGradient>
          <linearGradient id="gGreen" x1="0" y1="0" x2="0" y2="1"><stop offset="0" stop-color="#86e788" /><stop offset="1" stop-color="#47c43f" /></linearGradient>
          <linearGradient id="gPurple" x1="0" y1="0" x2="0" y2="1"><stop offset="0" stop-color="#c070f0" /><stop offset="1" stop-color="#8a3fd0" /></linearGradient>
          <linearGradient id="gStore" x1="0" y1="0" x2="0" y2="1"><stop offset="0" stop-color="#4bb8f9" /><stop offset="1" stop-color="#2262e8" /></linearGradient>
          <linearGradient id="gZoom" x1="0" y1="0" x2="0" y2="1"><stop offset="0" stop-color="#5b97f8" /><stop offset="1" stop-color="#3a72f0" /></linearGradient>
          <linearGradient id="gTele" x1="0" y1="0" x2="0" y2="1"><stop offset="0" stop-color="#52a9e2" /><stop offset="1" stop-color="#2c7fb9" /></linearGradient>
          <linearGradient id="gTrash" x1="0" y1="0" x2="1" y2="0"><stop offset="0" stop-color="#c9cdd4" /><stop offset=".4" stop-color="#eceef1" /><stop offset="1" stop-color="#c4c8cf" /></linearGradient>
        </defs>
      </svg>
      <div v-for="(group, g) in dockGroups" :key="g" class="dock-group">
        <div v-for="item in group" :key="item.name" class="dock-item">
          <svg width="75" height="92" viewBox="0 0 75 92" :aria-label="item.name" v-html="item.art"></svg>
          <span v-if="item.badge" class="badge" :class="{ wide: item.wide, mid: item.badge.startsWith('..') }">{{ item.badge }}</span>
          <i v-if="item.running" class="running"></i>
        </div>
      </div>
    </div>
  </div>
</template>

<style>
html,
body {
  margin: 0;
  overflow: hidden;
  background: #05182a;
}
</style>

<style scoped>
.desktop {
  position: relative;
  width: 2880px;
  height: 1800px;
  overflow: hidden;
  background: #3f6088;
  font-family: Inter, 'Liberation Sans', sans-serif;
}
.desktop span,
.desktop b,
.desktop em {
  white-space: pre;
}
svg {
  display: block;
  flex: none;
}
.wallpaper {
  position: absolute;
  left: 0;
  bottom: 0;
}

/* menu bar */
.menubar {
  height: 44px;
  display: flex;
  align-items: center;
  padding-left: 42px;
  padding-right: 46px;
  background: linear-gradient(90deg, #c5e3f1, #c4dff0 45%, #cbe2ee 68%, #e2e6ee);
  border-bottom: 2px solid #42618a;
  color: #1b2f3b;
}
.apple {
  margin-top: -5px;
}
.menubar-app {
  margin-left: 41px;
  font-size: 27px;
  font-weight: 700;
}
.status {
  margin-left: auto;
  display: flex;
  align-items: center;
}
.tray {
  position: relative;
  margin-left: 21px;
  width: 37px;
}
.tray-badge {
  position: absolute;
  left: 0;
  top: 13px;
  width: 37px;
  height: 22px;
  border-radius: 11px;
  background: #b02f33;
  color: #f3dede;
  font-size: 18px;
  line-height: 22px;
  text-align: center;
}
.ml-bt { margin-left: 29px; }
.ml-wifi { margin-left: 28px; }
.ml-pct { margin-left: 23px; }
.ml-bat { margin-left: 10px; }
.ml-time { margin-left: 35px; }
.ml-find { margin-left: 42px; }
.ml-siri { margin-left: 34px; }
.ml-list { margin-left: 24px; }
.st-text { font-size: 25px; }
.st-time { font-size: 27px; }

/* browser */
.chrome {
  position: absolute;
  left: 0;
  top: 46px;
  width: 2880px;
  height: 1658px;
  border-radius: 10px 10px 14px 14px;
  overflow: hidden;
  background: #fff;
  display: flex;
  flex-direction: column;
}
.tabs {
  height: 84px;
  flex: none;
  display: flex;
  align-items: center;
  background: #e8eaed;
  padding-left: 2166px;
  padding-top: 16px;
  box-sizing: border-box;
  color: #5f6368;
}
.tab-prev {
  width: 64px;
  font-size: 26px;
  -webkit-mask-image: linear-gradient(90deg, #000 25%, transparent 92%);
  mask-image: linear-gradient(90deg, #000 25%, transparent 92%);
}
.tab-x {
  margin-left: 13px;
}
.tab {
  margin-left: 20px;
  width: 427px;
  height: 68px;
  border-radius: 16px 16px 0 0;
  background: #fff;
  display: flex;
  align-items: center;
  padding-left: 25px;
  box-sizing: border-box;
}
.tab-title {
  margin-left: 16px;
  font-size: 26px;
}
.tab-close {
  margin-left: 57px;
}
.tab-plus {
  margin-left: 31px;
}
.omni-row {
  height: 72px;
  flex: none;
  display: flex;
  align-items: center;
  border-bottom: 2px solid #d8dadd;
}
.omni {
  width: 2535px;
  height: 56px;
  border-radius: 28px;
  background: #f0f2f4;
  display: flex;
  align-items: center;
  justify-content: flex-end;
  padding-right: 19px;
  box-sizing: border-box;
}
.exts {
  display: flex;
  align-items: center;
  margin-left: 29px;
}
.exts > * + * {
  margin-left: 32px;
}
.exts > .avatar {
  width: 44px;
  height: 44px;
  margin-left: 26px;
  margin-right: -6px;
  border-radius: 50%;
  background: #6f9a44;
  color: #fff;
  font-size: 20px;
  line-height: 44px;
  text-align: center;
}
.page {
  position: relative;
  flex: 1;
  display: flex;
}
.page-band {
  position: absolute;
  left: 0;
  top: 0;
  width: 8px;
  height: 211px;
  background: #0c2a66;
}
.page-side {
  width: 600px;
  display: flex;
  align-items: flex-end;
  padding: 0 0 0 120px;
  box-sizing: border-box;
  color: #333;
  font-size: 28px;
  line-height: 32px;
}
.page-main {
  flex: 1;
  background: #f7f7f7;
}
.page-card {
  width: 2160px;
  height: 1300px;
  border: 2px solid #d6d6d6;
  border-radius: 0 0 6px 6px;
  box-sizing: border-box;
  background: #fff;
  padding: 1221px 0 0 1583px;
  font-size: 29px;
  color: #222;
}

/* document viewer */
.preview {
  position: absolute;
  left: 8px;
  top: 53px;
  width: 2175px;
  height: 1581px;
  border-radius: 10px;
  overflow: hidden;
  background: #ebebeb;
  box-shadow: 0 0 0 1px #b4b4b4, 0 18px 44px rgba(0, 0, 0, 0.24);
}
.pv-head {
  height: 111px;
  background: #f5f5f5;
  border-bottom: 2px solid #c9c9c9;
  box-sizing: border-box;
}
.pv-title {
  height: 46px;
  margin-bottom: 4px;
  display: flex;
  align-items: center;
  padding-left: 16px;
}
.lights {
  display: flex;
  gap: 16px;
}
.lights i {
  width: 24px;
  height: 24px;
  border-radius: 50%;
  box-sizing: border-box;
  border: 1px solid #cfcfcf;
  background: #dedede;
}
.lights .r { background: #ee6a5f; border-color: #d65348; }
.lights .y { background: #f5bf4f; border-color: #d9a136; }
.lights .g { background: #62c655; border-color: #48ab3b; }
.pv-name {
  margin-left: 640px;
  display: flex;
  align-items: center;
  gap: 13px;
  font-size: 26px;
  color: #b0b0b0;
}
.pv-tools {
  display: flex;
  align-items: center;
  height: 46px;
  padding-left: 16px;
}
.btn {
  height: 46px;
  box-sizing: border-box;
  border: 2px solid #dedede;
  border-radius: 8px;
  display: flex;
  align-items: center;
  justify-content: center;
}
.w73 { width: 73px; }
.w80 { width: 80px; }
.w75 { width: 76px; }
.w68 { width: 69px; }
.w39 { width: 40px; }
.w66 { width: 66px; }
.btn.left { margin-left: 15px; border-radius: 8px 0 0 8px; }
.btn.right { margin-left: -2px; border-radius: 0 8px 8px 0; }
.btn.share { margin-left: 16px; }
.btn.left.hl { margin-left: 1040px; }
.btn.g14 { margin-left: 15px; }
.btn.g18 { margin-left: 18px; }
.search {
  margin-left: 16px;
  width: 476px;
  height: 44px;
  box-sizing: border-box;
  border: 2px solid #dcdcdc;
  border-radius: 8px;
  display: flex;
  align-items: center;
  gap: 10px;
  padding-left: 8px;
  font-size: 25px;
  color: #c2c2c2;
}
.pv-body {
  padding-left: 399px;
  display: flex;
  flex-direction: column;
  gap: 22px;
}
.prev-page {
  width: 1376px;
  height: 57px;
  background: #fff;
}
.pdf {
  width: 1376px;
  height: 1400px;
  padding: 67px 0 0 93px;
  box-sizing: border-box;
  background: #fff;
}
.pdf-text {
  height: 1087px;
  overflow: hidden;
  font-family: 'Noto Sans', 'Open Sans', sans-serif;
  font-size: 26.5px;
  color: #111;
}
.pl {
  height: 41.7px;
  line-height: 41.7px;
  white-space: pre;
}
.pl.in {
  margin: -21.5px 0 0 52px;
}
.bullet {
  display: flex;
}
.dot {
  width: 11px;
  height: 11px;
  margin: 16px 20px 0 21px;
  margin-left: 21px;
  border-radius: 50%;
  background: #111;
}
.space-s { margin-top: 6px; }
.space-l { margin-top: 26px; }
.visual { margin-top: 26px; }
.pl code {
  display: inline-block;
  height: 37px;
  line-height: 36px;
  padding: 0 60px 0 10px;
  box-sizing: border-box;
  border: 2px solid #d6d6e2;
  border-radius: 6px;
  background: #e6e6f5;
  font-family: 'DejaVu Sans Mono', monospace;
  font-size: 22.5px;
  vertical-align: baseline;
}

/* picture of the program inside the document */
.mini {
  width: 1193px;
  height: 300px;
  background: #fff;
  color: #222;
  font-family: 'Noto Sans', 'Open Sans', sans-serif;
}
.m-title {
  height: 18px;
  display: flex;
  align-items: center;
  gap: 3px;
  padding-left: 1px;
  font-size: 10px;
}
.m-ctl {
  margin-left: auto;
  margin-right: 16px;
  display: flex;
  align-items: center;
  gap: 29px;
}
.m-ctl b { font-weight: 400; }
.m-menu {
  height: 25px;
  display: flex;
  align-items: center;
  gap: 15px;
  padding-left: 13px;
  background: #5897e2;
  color: #dbe7f6;
  font-size: 12.5px;
}
.m-input {
  margin: 8px 9px 0 8px;
  height: 30px;
  box-sizing: border-box;
  border: 2px solid #a9a9a9;
  border-radius: 8px;
  padding: 4px 0 0 8px;
}
.m-input i {
  display: block;
  width: 1px;
  height: 19px;
  background: #444;
}
.m-result {
  position: relative;
  margin: 13px 9px 0;
  height: 68px;
  box-sizing: border-box;
  border: 2px solid #a9a9a9;
  border-radius: 3px;
  overflow: hidden;
  padding: 5px 0 0 7px;
  font-size: 14px;
  line-height: 17.7px;
}
.m-result .ind { padding-left: 4px; height: 17.7px; }
.m-bar {
  position: absolute;
  right: 0;
  top: 0;
  width: 10px;
  height: 64px;
  background: #efefef;
  border-left: 1px solid #ddd;
}
.m-bar i {
  display: block;
  margin: 4px 1px;
  height: 38px;
  border-radius: 3px;
  background: #c4c4c4;
}
.m-heads {
  height: 25px;
  display: flex;
  align-items: center;
  font-size: 11.5px;
  padding-left: 301px;
  gap: 535px;
}
.m-lists {
  display: flex;
  padding-left: 9px;
  height: 110px;
}
.m-left {
  width: 606px;
  display: flex;
  flex-direction: column;
  gap: 8px;
}
.m-card {
  position: relative;
  padding-left: 110px;
  border-radius: 5px;
  line-height: 16px;
  color: #f3e9e5;
}
.m-card.clip {
  height: 12px;
  overflow: hidden;
  border-radius: 0 0 5px 5px;
  font-size: 11px;
}
.m-card.clip span {
  display: block;
  width: max-content;
  margin-top: -6px;
}
.m-card.orange {
  height: 90px;
  padding-top: 6px;
  font-size: 12.5px;
}
.m-cover {
  position: absolute;
  left: 28px;
  top: 26px;
  width: 54px;
  height: 50px;
  background: #e6e8d2;
}
.m-tags {
  display: flex;
  gap: 6px;
  margin-top: 3px;
}
.m-tags em {
  font-style: normal;
  font-size: 9.5px;
  line-height: 12px;
  padding: 0 1px;
  color: #dcecf0;
  background: #3d7b8f;
}
.m-track {
  width: 12px;
  background: #efefef;
}
.m-right {
  margin-left: 17px;
  width: 539px;
  border-radius: 5px;
  background: #ea754d;
  padding: 25px 0 0 12px;
  box-sizing: border-box;
  color: #f3e9e5;
  font-size: 12.5px;
  line-height: 18px;
}
.m-right span,
.m-right small {
  display: table;
  white-space: pre;
}
.m-right small { font-size: 10.5px; }

/* call overlay */
.talk {
  position: absolute;
  left: 68px;
  top: 142px;
  width: 484px;
  height: 80px;
  box-sizing: border-box;
  padding-left: 40px;
  border-radius: 7px;
  overflow: hidden;
  display: flex;
  align-items: center;
  gap: 44px;
  background: #1f1f1f;
  box-shadow: 0 12px 40px rgba(0, 0, 0, 0.35);
  color: #f0f0f0;
  font-family: 'Noto Sans', 'Open Sans', sans-serif;
  font-size: 25px;
}
.talk svg {
  margin-top: -6px;
}

/* IntelliBrary window */
.app {
  position: absolute;
  left: 600px;
  top: 199px;
  width: 2280px;
  height: 1201px;
  border-radius: 10px;
  overflow: hidden;
  background: #fdfdfd;
  display: flex;
  flex-direction: column;
  box-shadow: 0 0 0 1px rgba(90, 90, 90, 0.5), 0 34px 66px rgba(0, 0, 0, 0.46);
}
.app-title {
  height: 45px;
  flex: none;
  box-sizing: border-box;
  display: flex;
  align-items: center;
  padding: 3px 0 0 16px;
  background: linear-gradient(#f4f4f4, #e2e2e2 4%, #cdcdcd);
  border-bottom: 2px solid #a9a9a9;
}
.app-name {
  margin-left: 932px;
  display: flex;
  align-items: center;
  gap: 8px;
  font-size: 26px;
  color: #454545;
}
.app-menu {
  height: 66px;
  flex: none;
  display: flex;
  align-items: center;
  padding-left: 35px;
  gap: 41px;
  background: #5897e2;
  color: #dbe6f3;
  font-size: 36px;
}
.app-body {
  flex: 1;
  display: flex;
  flex-direction: column;
  padding: 22px 24px 14px 23px;
  box-shadow: inset 0 -6px 5px -4px #bbb;
}
.cmd {
  height: 72px;
  flex: none;
  margin: 0 -1px;
  box-sizing: border-box;
  border: 2px solid #7c7c7c;
  border-radius: 20px;
  background: #fff;
  box-shadow: inset 0 3px 6px #e4e4e4, inset 0 -3px 6px #ededed;
}
.result {
  margin: 36px 0 0 1px;
  height: 172px;
  flex: none;
  box-sizing: border-box;
  border: 2px solid #7c7c7c;
  border-radius: 5px;
  background: #fff;
  box-shadow: inset 0 3px 6px #dedede, inset 0 -3px 6px #e8e8e8;
  display: flex;
  overflow: hidden;
}
.result-text {
  flex: 1;
  padding: 10px 0 0 22px;
  font-size: 33.5px;
  color: #000;
}
.result-text > div {
  height: 44px;
  line-height: 44px;
}
.result-text .ind { padding-left: 7px; }
.result-bar {
  width: 30px;
  background: #f0f0f0;
}
.result-bar i {
  display: block;
  margin: 10px 5px 0;
  height: 100px;
  border-radius: 6px;
  background: #c4c4c4;
}
.heads {
  height: 64px;
  flex: none;
  display: flex;
  align-items: center;
  font-size: 26px;
  color: #333;
  padding-top: 4px;
  box-sizing: border-box;
}
.h-books {
  width: 1196px;
  text-align: center;
}
.h-problems {
  margin-left: 43px;
  width: 994px;
  text-align: center;
}
.lists {
  flex: none;
  height: 660px;
  display: flex;
  padding-left: 1px;
}
.books {
  width: 1164px;
  overflow: hidden;
  display: flex;
  flex-direction: column;
  justify-content: flex-end;
  gap: 20px;
  padding-bottom: 20px;
  box-sizing: border-box;
}
.orange { background: #ea754d; }
.teal { background: #68bdd7; }
.book,
.problem {
  flex: none;
  box-sizing: border-box;
  border-radius: 15px;
  color: #efefef;
  box-shadow: inset 0 0 5px rgba(90, 60, 50, 0.22);
}
.book {
  height: 264px;
  display: flex;
  padding-left: 70px;
}
.cover {
  width: 140px;
  height: 210px;
  margin-top: 37px;
  background: #d2d4d3;
  padding: 30px 0 0 31px;
  box-sizing: border-box;
}
.cover i {
  display: block;
  width: 75px;
  height: 148px;
  background: linear-gradient(90deg, #4a4a4a 0 2px, #636363 3px 4px, #4f4f4f 5px, #6d6d6d 8px, #3f3f3f);
  box-shadow: 2px 3px 3px rgba(0, 0, 0, 0.2);
}
.info {
  margin-left: 70px;
  padding-top: 13px;
}
.info-title {
  height: 36px;
  margin-bottom: 1px;
  line-height: 36px;
  font-size: 31.5px;
  word-spacing: 2px;
}
.row {
  height: 34px;
  line-height: 34px;
  font-size: 25.5px;
  white-space: nowrap;
}
.v-isbn { margin-left: 76px; }
.v-lang { margin-left: 17px; }
.v-contact { margin-left: 27px; }
.v-author { margin-left: 37px; }
.v-pub { margin-left: 16px; }
.v-num { margin-left: 17px; }
.track {
  width: 30px;
  background: #f0f0f0;
  display: flex;
  align-items: flex-end;
  justify-content: center;
  padding: 0 0 8px 1px;
  box-sizing: border-box;
}
.track i {
  width: 20px;
  height: 89px;
  border-radius: 6px;
  background: #c9c9c9;
}
.problems {
  margin-left: 44px;
  width: 994px;
  display: flex;
  flex-direction: column;
  gap: 20px;
}
.problem {
  height: 190px;
  padding: 70px 0 0 30px;
}
.p-head {
  height: 38px;
  line-height: 38px;
  font-size: 32px;
  word-spacing: 2px;
}
.p-text {
  height: 34px;
  line-height: 34px;
  font-size: 25.5px;
}
.app-foot {
  height: 50px;
  flex: none;
  display: flex;
  align-items: center;
  padding: 0 0 1px 8px;
  box-sizing: border-box;
  background: #5897e2;
  color: #f0f3f6;
  font-size: 26px;
}

/* dock */
.dock {
  position: absolute;
  left: 56px;
  top: 1708px;
  width: 2768px;
  height: 110px;
  box-sizing: border-box;
  padding-left: 4.6px;
  border-radius: 12px;
  display: flex;
  background: linear-gradient(90deg, #44617f, #47617c 55%, #506480);
  box-shadow: 0 -6px 60px rgba(0, 0, 0, 0.16);
}
.defs {
  position: absolute;
}
.dock-group {
  display: flex;
}
.dock-group + .dock-group {
  padding-left: 33px;
  background: linear-gradient(#1c3450, #1c3450) 17px 12px / 2px 68px no-repeat;
}
.dock-item {
  position: relative;
  width: 74.7px;
  height: 92px;
}
.badge {
  position: absolute;
  left: 48px;
  top: 7px;
  width: 27px;
  height: 27px;
  border-radius: 14px;
  background: #dc4b42;
  color: #fff;
  font-size: 19px;
  line-height: 27px;
  text-align: center;
}
.badge.wide {
  left: 33px;
  width: 42px;
  font-size: 14.5px;
}
.badge.mid {
  left: 42px;
  width: 30px;
  font-size: 15px;
}
.running {
  position: absolute;
  left: 34px;
  top: 80px;
  width: 8px;
  height: 8px;
  border-radius: 50%;
  background: #000;
}
</style>
